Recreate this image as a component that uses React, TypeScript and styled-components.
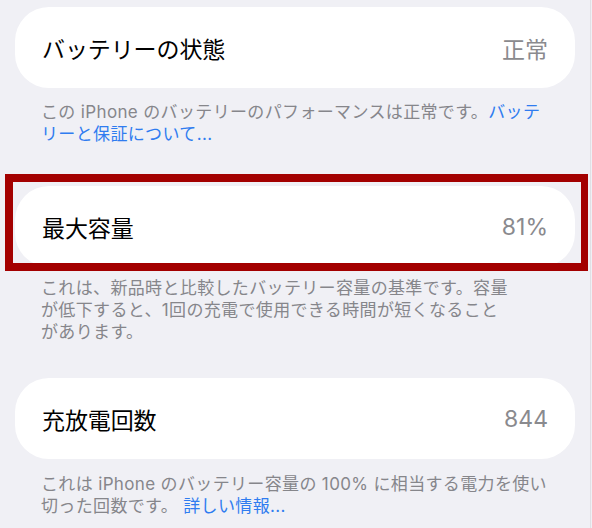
import React from "react";
import styled, { createGlobalStyle } from "styled-components";

const GlobalStyle = createGlobalStyle`
  html, body {
    margin: 0;
    padding: 0;
    background: #f0f0f5;
  }
  body {
    font-family: "Inter", "Noto Sans CJK JP", sans-serif;
    -webkit-font-smoothing: antialiased;
  }
`;

const Page = styled.div`
  width: 591px;
  height: 528px;
  overflow: hidden;
  box-sizing: border-box;
  padding: 7px 15px 0 15px;
  background: #f0f0f5;
  border-right: 1px solid #e0e0e5;
  display: flex;
  flex-direction: column;
`;

const Section = styled.section<{ $gap: number }>`
  display: flex;
  flex-direction: column;
  margin-top: ${(p) => p.$gap}px;
`;

const CardWrap = styled.div`
  position: relative;
`;

const Card = styled.div`
  height: 81px;
  box-sizing: border-box;
  background: #ffffff;
  border-radius: 34px;
  padding: 0 27px 0 27px;
  display: flex;
  align-items: center;
  justify-content: space-between;
`;

const Label = styled.span`
  font-size: 23px;
  color: #000000;
  font-weight: 400;
  letter-spacing: -0.1px;
`;

const Value = styled.span`
  font-size: 23px;
  color: #8a8a8e;
  font-weight: 400;
`;

const Footer = styled.p<{ $top: number }>`
  margin: ${(p) => p.$top}px 0 0 0;
  padding: 0 10px 0 26px;
  font-size: 17px;
  line-height: 22px;
  letter-spacing: 0.35px;
  color: #86868b;
  white-space: nowrap;
`;

const Link = styled.span`
  color: #2f7cf0;
`;

const Highlight = styled.div`
  position: absolute;
  top: -12px;
  left: -10px;
  right: -13px;
  bottom: -4px;
  border: 8px solid #a30000;
  border-right-width: 7px;
  pointer-events: none;
`;

export default function App() {
  return (
    <>
      <GlobalStyle />
      <Page>
        <Section $gap={0}>
          <Card>
            <Label>バッテリーの状態</Label>
            <Value>正常</Value>
          </Card>
          <Footer $top={13}>
            この iPhone のバッテリーのパフォーマンスは正常です。<Link>バッテ</Link>
            <br />
            <Link>リーと保証について...</Link>
          </Footer>
        </Section>

        <Section $gap={41}>
          <CardWrap>
            <Card>
              <Label>最大容量</Label>
              <Value>81%</Value>
            </Card>
            <Highlight />
          </CardWrap>
          <Footer $top={10}>
            これは、新品時と比較したバッテリー容量の基準です。容量
            <br />
            が低下すると、1回の充電で使用できる時間が短くなること
            <br />
            があります。
          </Footer>
        </Section>

        <Section $gap={35}>
          <Card>
            <Label>充放電回数</Label>
            <Value>844</Value>
          </Card>
          <Footer $top={14}>
            これは iPhone のバッテリー容量の 100% に相当する電力を使い
            <br />
            切った回数です。 <Link>詳しい情報...</Link>
          </Footer>
        </Section>
      </Page>
    </>
  );
}
